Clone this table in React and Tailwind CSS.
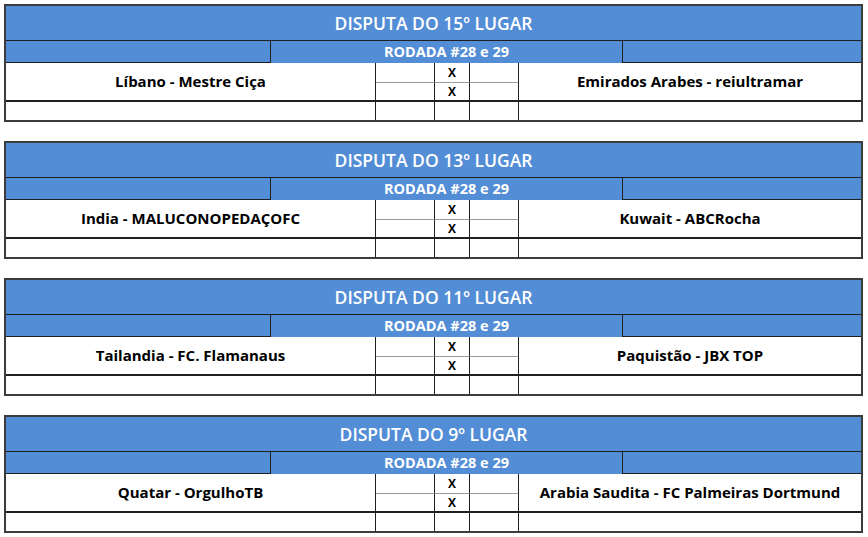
const tables = [
  { title: "DISPUTA DO 15º LUGAR", left: "Líbano - Mestre Ciça", right: "Emirados Arabes - reiultramar" },
  { title: "DISPUTA DO 13º LUGAR", left: "India - MALUCONOPEDAÇOFC", right: "Kuwait - ABCRocha" },
  { title: "DISPUTA DO 11º LUGAR", left: "Tailandia - FC. Flamanaus", right: "Paquistão - JBX TOP" },
  { title: "DISPUTA DO 9º LUGAR", left: "Quatar - OrgulhoTB", right: "Arabia Saudita - FC Palmeiras Dortmund" },
];

function Table({ t }) {
  return (
    <div className="w-[859px] border-2 border-[#3c3c3c] grid grid-cols-[265px_105px_59px_35px_49px_104px_238px] grid-rows-[35px_22px_20px_19px_18px] bg-white">
      <div className="col-span-7 bg-[#538dd5] border-b border-[#1f1f1f] flex items-center justify-center text-white font-semibold text-[17.5px] pt-[1px]">
        {t.title}
      </div>
      <div className="bg-[#538dd5] border-r border-b border-[#1f1f1f]"></div>
      <div className="col-span-5 bg-[#538dd5] border-r border-[#1f1f1f] flex items-center justify-center text-white font-bold text-[14.5px]">
        RODADA #28 e 29
      </div>
      <div className="bg-[#538dd5] border-b border-[#1f1f1f]"></div>
      <div className="col-span-2 row-span-2 border-r border-b-2 border-[#1f1f1f] flex items-center justify-center font-bold text-[15px] text-black">
        {t.left}
      </div>
      <div className="border-r border-[#1f1f1f] border-b border-b-[#9a9a9a]"></div>
      <div className="border-r border-[#1f1f1f] border-b border-b-[#9a9a9a] flex items-center justify-center font-bold text-[12px] text-black">X</div>
      <div className="border-r border-[#1f1f1f] border-b border-b-[#9a9a9a]"></div>
      <div className="col-span-2 row-span-2 border-b-2 border-[#1f1f1f] flex items-center justify-center font-bold text-[15px] text-black">
        {t.right}
      </div>
      <div className="border-r border-b-2 border-[#1f1f1f]"></div>
      <div className="border-r border-b-2 border-[#1f1f1f] flex items-center justify-center font-bold text-[12px] text-black">X</div>
      <div className="border-r border-b-2 border-[#1f1f1f]"></div>
      <div className="col-span-2 border-r border-[#1f1f1f]"></div>
      <div className="border-r border-[#1f1f1f]"></div>
      <div className="border-r border-[#1f1f1f]"></div>
      <div className="border-r border-[#1f1f1f]"></div>
      <div className="col-span-2"></div>
    </div>
  );
}

export default function App() {
  return (
    <div className="w-[868px] h-[537px] bg-white pt-[4px] pl-[4px] flex flex-col gap-[19px]" style={{ fontFamily: '"Open Sans", sans-serif' }}>
      {tables.map((t, i) => (
        <Table key={i} t={t} />
      ))}
    </div>
  );
}
